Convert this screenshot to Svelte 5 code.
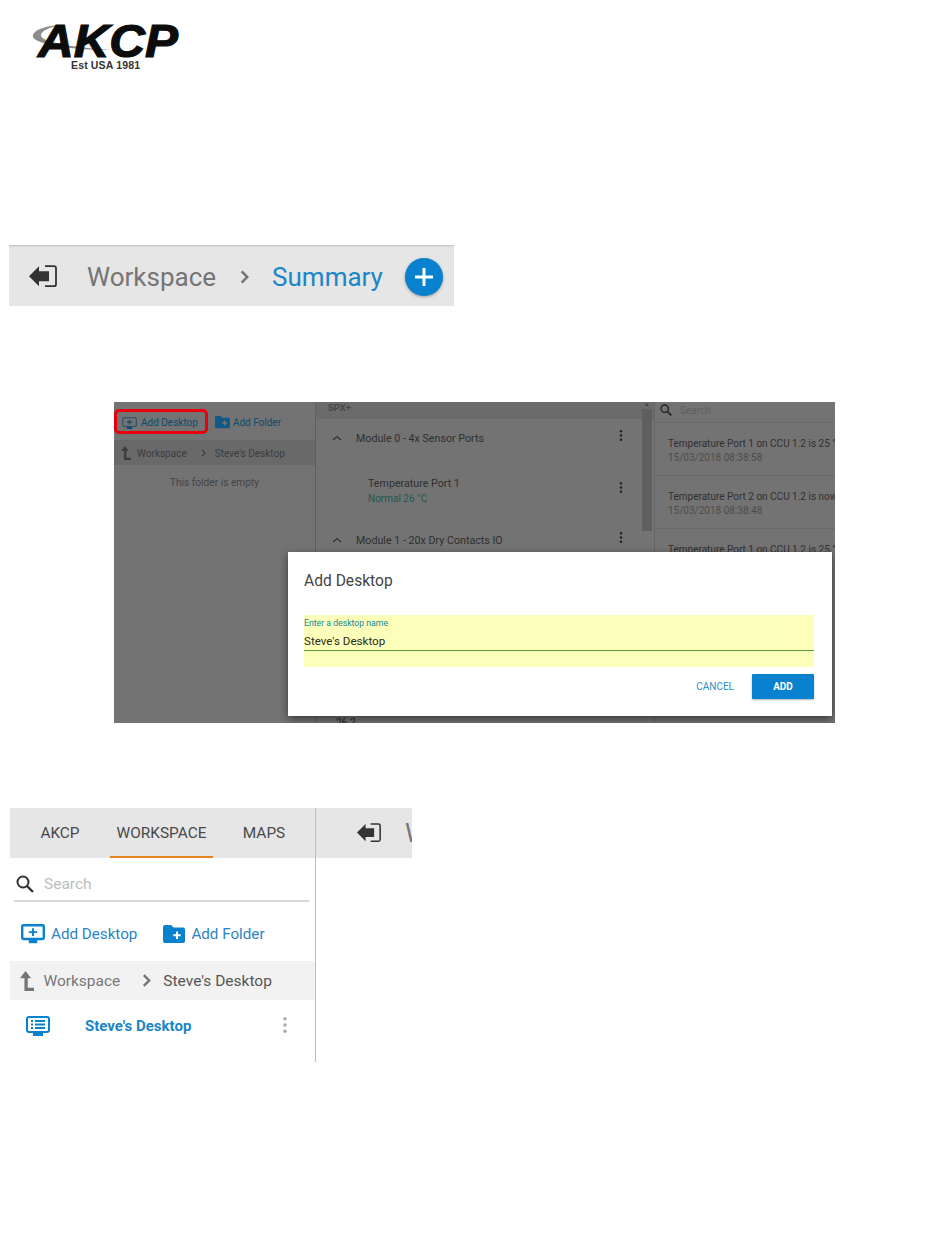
<script>
  const events = [
    { title: "Temperature Port 1 on CCU 1.2 is 25 °C", time: "15/03/2018 08:38:58" },
    { title: "Temperature Port 2 on CCU 1.2 is now", time: "15/03/2018 08:38:48" },
    { title: "Temperature Port 1 on CCU 1.2 is 25 °C", time: "" }
  ];
</script>

<style>
  :global(body) {
    background: #fff;
    font-family: Roboto, "Liberation Sans", sans-serif;
  }
  .page {
    width: 950px;
    height: 1260px;
    overflow: hidden;
    padding-top: 20px;
    box-sizing: border-box;
  }
  .logo {
    display: block;
    margin-left: 30px;
  }

  /* top breadcrumb strip */
  .crumbbar {
    width: 445px;
    height: 61px;
    margin: 171px 0 0 9px;
    background: #e6e6e6;
    box-shadow: inset 0 2px 2px -1px #bdbdbd;
    display: flex;
    align-items: center;
    font-size: 26px;
    box-sizing: border-box;
    padding: 2px 0 0 20px;
  }
  .crumbbar .back {
    display: flex;
    margin-right: 30px;
  }
  .crumbbar .ws {
    color: #757575;
  }
  .crumbbar .chev {
    display: flex;
    margin: 0 23px 0 24px;
  }
  .crumbbar .cur {
    color: #1a85c8;
  }
  .fab {
    width: 38px;
    height: 38px;
    margin-left: 22px;
    border-radius: 50%;
    background: #0882cf;
    box-shadow: 0 1px 3px rgba(0, 0, 0, 0.35);
    display: flex;
    align-items: center;
    justify-content: center;
  }

  /* dimmed screenshot with dialog */
  .shot {
    position: relative;
    width: 721px;
    height: 321px;
    margin: 96px 0 0 114px;
    background: #737373;
    overflow: hidden;
    display: flex;
    font-size: 10.7px;
    color: #303030;
  }
  .shot .left {
    width: 201px;
    border-right: 1px solid #5f5f5f;
    flex: none;
    font-size: 10.2px;
  }
  .addrow {
    height: 38px;
    display: flex;
    align-items: center;
    color: #0f4a70;
    padding: 3px 0 0 8px;
    box-sizing: border-box;
    font-size: 10px;
  }
  .addrow .item {
    display: flex;
    align-items: center;
    gap: 4px;
  }
  .addrow .first {
    margin-right: 17px;
  }
  .addrow .second {
    gap: 3px;
  }
  .hl {
    position: absolute;
    left: 0;
    top: 7px;
    width: 94px;
    height: 25px;
    border: 3px solid #e8000e;
    border-radius: 5px;
    box-sizing: border-box;
  }
  .path {
    height: 25px;
    background: #696969;
    display: flex;
    align-items: center;
    padding: 1px 0 0 7px;
    box-sizing: border-box;
    color: #3c3c3c;
    font-size: 10px;
  }
  .path .name {
    margin-left: 6px;
  }
  .path .gt {
    margin: 0 9px 0 14px;
    display: flex;
  }
  .empty {
    text-align: center;
    margin-top: 12px;
    line-height: 12px;
    color: #454545;
  }
  .shot .mid {
    width: 339px;
    flex: none;
    position: relative;
    border-right: 1px solid #666;
    box-sizing: border-box;
  }
  .midhead {
    height: 17px;
    background: #6b6b6b;
    color: #444;
    font-size: 9.5px;
    font-weight: 500;
    padding-left: 12px;
    line-height: 12px;
  }
  .module {
    display: flex;
    align-items: center;
    height: 20px;
    padding: 0 0 0 16px;
    position: relative;
  }
  .module .label {
    margin-left: 14px;
  }
  .m0 {
    margin-top: 9px;
  }
  .m1 {
    margin-top: 24px;
  }
  .port {
    position: relative;
    margin-top: 28px;
    padding-left: 52px;
    height: 30px;
    line-height: 15px;
  }
  .port .ok {
    color: #24584a;
    font-size: 10px;
  }
  .kebab {
    position: absolute;
    left: 303px;
    top: 2px;
    display: flex;
  }
  .port .kebab {
    top: 6px;
  }
  .scroll {
    position: absolute;
    left: 326px;
    top: 7px;
    width: 10px;
    height: 122px;
    background: #5f5f5f;
  }
  .scrollup {
    position: absolute;
    left: 329px;
    top: 1px;
    width: 0;
    height: 0;
    border: 2px solid transparent;
    border-bottom: 3px solid #444;
    border-top: 0;
  }
  .reading {
    position: absolute;
    left: 20px;
    top: 315px;
    font-size: 10px;
    color: #222;
  }
  .shot .right {
    flex: 1;
    min-width: 0;
    white-space: nowrap;
    overflow: hidden;
    font-size: 10px;
  }
  .rsearch {
    height: 21px;
    display: flex;
    align-items: center;
    gap: 8px;
    padding: 0 0 4px 5px;
    box-sizing: border-box;
    color: #5f5f5f;
    border-bottom: 1px solid #696969;
  }
  .event {
    height: 53px;
    box-sizing: border-box;
    padding: 14px 0 0 13px;
    border-bottom: 1px solid #696969;
    line-height: 14px;
  }
  .event .time {
    color: #4c4c4c;
  }
  .dialog {
    position: absolute;
    left: 174px;
    top: 150px;
    width: 544px;
    height: 164px;
    background: #fff;
    box-shadow: 0 3px 8px rgba(0, 0, 0, 0.5);
    box-sizing: border-box;
    padding: 21px 18px 0 16px;
  }
  .dialog h2 {
    margin: 0;
    font-size: 15.6px;
    line-height: 17px;
    font-weight: 400;
    color: #444;
  }
  .field {
    margin-top: 25px;
    height: 52px;
    background: #fbffba;
    box-sizing: border-box;
    padding-top: 3px;
  }
  .field .lbl {
    font-size: 8.7px;
    line-height: 11px;
    color: #128a9e;
  }
  .field .val {
    font-size: 11.6px;
    line-height: 14px;
    margin-top: 5px;
    padding-bottom: 2px;
    color: #2b2b1c;
    border-bottom: 1px solid #5d9c3a;
  }
  .actions {
    display: flex;
    justify-content: flex-end;
    align-items: center;
    margin-top: 7px;
  }
  .cancel {
    font-size: 10px;
    color: #2d8dc8;
    margin-right: 18px;
  }
  .add {
    width: 62px;
    height: 25px;
    background: #0882cf;
    border-radius: 1px;
    color: #fff;
    font-size: 10px;
    font-weight: 700;
    display: flex;
    align-items: center;
    justify-content: center;
    box-shadow: 0 1px 2px rgba(0, 0, 0, 0.3);
  }

  /* sidebar crop */
  .side {
    width: 402px;
    height: 254px;
    margin: 85px 0 0 10px;
    display: flex;
    overflow: hidden;
  }
  .col {
    width: 305px;
    flex: none;
    border-right: 1px solid #bdbdbd;
  }
  .tabs {
    height: 50px;
    background: #e6e6e6;
    display: flex;
    font-size: 15.4px;
    color: #4a4a4a;
    box-sizing: border-box;
  }
  .tab {
    display: flex;
    align-items: center;
    justify-content: center;
    border-bottom: 2px solid transparent;
    padding-top: 1px;
    box-sizing: border-box;
  }
  .tab.on {
    border-bottom-color: #e8821e;
  }
  .search {
    height: 44px;
    margin: 0 6px 0 4px;
    border-bottom: 2px solid #d9d9d9;
    display: flex;
    align-items: center;
    gap: 10px;
    padding: 10px 0 0 2px;
    box-sizing: border-box;
    font-size: 15.5px;
    color: #bdbdbd;
  }
  .adds {
    height: 59px;
    display: flex;
    align-items: center;
    font-size: 15.2px;
    color: #2b84c4;
    padding: 5px 0 0 11px;
    box-sizing: border-box;
  }
  .adds .item {
    display: flex;
    align-items: center;
    gap: 6px;
  }
  .adds .first {
    margin-right: 26px;
  }
  .adds .second {
    gap: 6px;
  }
  .crumb2 {
    height: 39px;
    background: #f2f2f2;
    display: flex;
    align-items: center;
    padding-left: 10px;
    font-size: 15.5px;
    color: #777;
  }
  .crumb2 .name {
    margin-left: 9px;
  }
  .crumb2 .gt {
    display: flex;
    margin: 0 12px 0 22px;
  }
  .crumb2 .here {
    color: #555;
    font-size: 15.5px;
  }
  .row {
    height: 51px;
    display: flex;
    align-items: center;
    padding: 1px 0 0 16px;
    box-sizing: border-box;
    font-size: 15px;
    font-weight: 700;
    color: #1a85c8;
    position: relative;
  }
  .row .title {
    margin-left: 35px;
  }
  .row .more {
    position: absolute;
    left: 273px;
    top: 17px;
    display: flex;
  }
  .rest {
    flex: 1;
    min-width: 0;
  }
  .rest .strip {
    height: 50px;
    background: #e6e6e6;
    display: flex;
    align-items: center;
    padding-left: 41px;
    font-size: 26px;
    color: #757575;
    overflow: hidden;
    white-space: nowrap;
  }
  .rest .icon {
    display: flex;
    flex: none;
    margin-right: 24px;
  }
</style>

{#snippet monitor(w, stroke, sw, plus)}
  <svg width={w} height={w * 0.8} viewBox="0 0 20 16">
    <rect x="1" y="1" width="18" height="11.500" rx="1" fill="none" stroke={stroke} stroke-width={sw} />
    <rect x="6.500" y="13" width="7" height="3" fill={stroke} />
    <path d="M10 3.500v6.500M6.500 6.750h7" stroke={plus} stroke-width="1.600" fill="none" />
  </svg>
{/snippet}

{#snippet folder(w, color, plus)}
  <svg width={w} height={w * 0.82} viewBox="0 0 22 18">
    <path d="M0 2Q0 0 2 0H8L10.500 2.500H20Q22 2.500 22 4.500V16Q22 18 20 18H2Q0 18 0 16Z" fill={color} />
    <path d="M14 6.500v7.500M10.250 10.250h7.500" stroke={plus} stroke-width="2" fill="none" />
  </svg>
{/snippet}

{#snippet backIcon(w, color)}
  <svg width={w} height={w * 0.8} viewBox="0 0 28 22">
    <path d="M0 11 10 1V6H20V16H10V21Z" fill={color} />
    <path d="M16 1H25Q27 1 27 3V19Q27 21 25 21H16" fill="none" stroke={color} stroke-width="1.800" />
  </svg>
{/snippet}

{#snippet upIcon(h, color)}
  <svg width={h * 0.72} height={h} viewBox="0 0 13 18">
    <path d="M5 0 10 6.500H7V15H13V18H4V6.500H0Z" fill={color} />
  </svg>
{/snippet}

{#snippet chevron(w, h, color, sw)}
  <svg width={w} height={h} viewBox="0 0 8 12">
    <path d="M1.500 1 6.500 6 1.500 11" fill="none" stroke={color} stroke-width={sw} />
  </svg>
{/snippet}

{#snippet lens(s, color)}
  <svg width={s} height={s} viewBox="0 0 18 18">
    <circle cx="7" cy="7" r="5.500" fill="none" stroke={color} stroke-width="2" />
    <path d="M11 11 17 17" stroke={color} stroke-width="2.400" />
  </svg>
{/snippet}

{#snippet dots(s, color)}
  <svg width="4" height={s} viewBox="0 0 4 18">
    <circle cx="2" cy="2" r="2" fill={color} />
    <circle cx="2" cy="9" r="2" fill={color} />
    <circle cx="2" cy="16" r="2" fill={color} />
  </svg>
{/snippet}

{#snippet caretUp()}
  <svg width="10" height="6" viewBox="0 0 10 6">
    <path d="M1 5 5 1.500 9 5" fill="none" stroke="#333" stroke-width="1.300" />
  </svg>
{/snippet}

<div class="page">
  <svg class="logo" width="155" height="54" viewBox="0 0 155 54">
    <path d="M32 5C10 6 2 12 3 17C5 24 40 30 82 30C45 28 12 22 11 16C10 11 20 7 32 5Z" fill="#8c8c8c" />
    <text x="8" y="37" font-family="Liberation Sans" font-weight="700" font-style="italic" font-size="46" textLength="140" lengthAdjust="spacingAndGlyphs" stroke="#0c0c0c" stroke-width="1.200" fill="#0c0c0c">AKCP</text>
    <text x="41" y="49" font-family="Liberation Sans" font-size="10.500" font-weight="700" fill="#333" textLength="69">Est USA 1981</text>
  </svg>

  <div class="crumbbar">
    <span class="back">{@render backIcon(28, "#333")}</span>
    <span class="ws">Workspace</span>
    <span class="chev">{@render chevron(9, 14, "#757575", 2.200)}</span>
    <span class="cur">Summary</span>
    <span class="fab">
      <svg width="20" height="20" viewBox="0 0 20 20"><path d="M10 1v18M1 10h18" stroke="#fff" stroke-width="3" /></svg>
    </span>
  </div>

  <div class="shot">
    <div class="left">
      <div class="addrow">
        <span class="item first">{@render monitor(15, "#0f4a70", 1.200, "#0f4a70")}Add Desktop</span>
        <span class="item second">{@render folder(15, "#11598a", "#737373")}Add Folder</span>
      </div>
      <div class="path">
        {@render upIcon(14, "#3c3c3c")}
        <span class="name">Workspace</span>
        <span class="gt">{@render chevron(5, 8, "#3c3c3c", 1.800)}</span>
        <span>Steve's Desktop</span>
      </div>
      <div class="empty">This folder is empty</div>
    </div>
    <div class="hl"></div>
    <div class="mid">
      <div class="midhead">SPX+</div>
      <div class="module m0">
        {@render caretUp()}<span class="label">Module 0 - 4x Sensor Ports</span>
        <span class="kebab">{@render dots(11, "#222")}</span>
      </div>
      <div class="port">
        <div>Temperature Port 1</div>
        <div class="ok">Normal 26 °C</div>
        <span class="kebab">{@render dots(11, "#222")}</span>
      </div>
      <div class="module m1">
        {@render caretUp()}<span class="label">Module 1 - 20x Dry Contacts IO</span>
        <span class="kebab">{@render dots(11, "#222")}</span>
      </div>
      <div class="scrollup"></div>
      <div class="scroll"></div>
      <div class="reading">26.2</div>
    </div>
    <div class="right">
      <div class="rsearch">{@render lens(12, "#222")}<span>Search</span></div>
      {#each events as ev}
        <div class="event">
          <div>{ev.title}</div>
          <div class="time">{ev.time}</div>
        </div>
      {/each}
    </div>
    <div class="dialog">
      <h2>Add Desktop</h2>
      <div class="field">
        <div class="lbl">Enter a desktop name</div>
        <div class="val">Steve's Desktop</div>
      </div>
      <div class="actions">
        <span class="cancel">CANCEL</span>
        <span class="add">ADD</span>
      </div>
    </div>
  </div>

  <div class="side">
    <div class="col">
      <div class="tabs">
        <div class="tab" style="width:100px">AKCP</div>
        <div class="tab on" style="width:103px">WORKSPACE</div>
        <div class="tab" style="width:102px">MAPS</div>
      </div>
      <div class="search">{@render lens(18, "#333")}<span>Search</span></div>
      <div class="adds">
        <span class="item first">{@render monitor(24, "#0882cf", 2, "#0882cf")}Add Desktop</span>
        <span class="item second">{@render folder(22, "#0882cf", "#fff")}Add Folder</span>
      </div>
      <div class="crumb2">
        {@render upIcon(20, "#757575")}
        <span class="name">Workspace</span>
        <span class="gt">{@render chevron(9, 13, "#757575", 2.200)}</span>
        <span class="here">Steve's Desktop</span>
      </div>
      <div class="row">
        <svg width="24" height="20" viewBox="0 0 24 20">
          <rect x="1" y="1" width="22" height="15" rx="2" fill="none" stroke="#0882cf" stroke-width="2" />
          <rect x="7" y="17" width="10" height="3" fill="#0882cf" />
          <path d="M5 5h2M9 5h10M5 8.500h2M9 8.500h10M5 12h2M9 12h10" stroke="#0882cf" stroke-width="2" />
        </svg>
        <span class="title">Steve's Desktop</span>
        <span class="more">{@render dots(16, "#aaa")}</span>
      </div>
    </div>
    <div class="rest">
      <div class="strip"><span class="icon">{@render backIcon(24, "#333")}</span><span>Workspace</span></div>
    </div>
  </div>
</div>
